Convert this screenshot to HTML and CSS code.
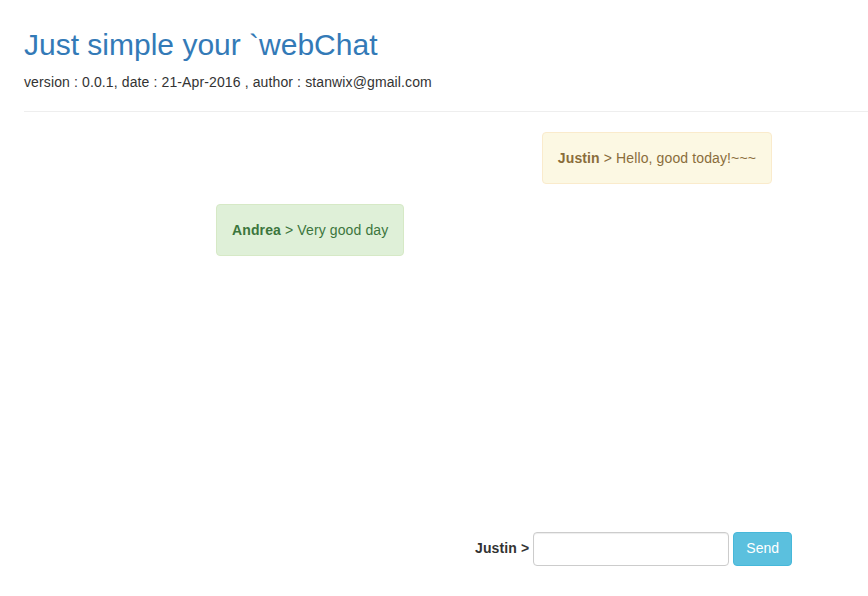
FILE: index.html
```html
<!DOCTYPE html>
<html>
<head>
<meta charset="utf-8">
<link rel="stylesheet" href="styles.css">
</head>
<body>
<div class="page">
  <header class="header">
    <h1 class="title">Just simple your `webChat</h1>
    <p class="meta">version : 0.0.1, date : 21-Apr-2016 , author : stanwix@gmail.com</p>
  </header>
  <hr class="divider">
  <main class="chat">
    <div class="row row-right">
      <div class="bubble bubble-warning"><b>Justin</b> &gt; Hello, good today!~~~</div>
    </div>
    <div class="row row-left">
      <div class="bubble bubble-success"><b>Andrea</b> &gt; Very good day</div>
    </div>
  </main>
  <form class="composer">
    <label class="who">Justin &gt;</label>
    <input class="field" type="text">
    <button class="send" type="button">Send</button>
  </form>
</div>
</body>
</html>
```
FILE: styles.css
```css
* { box-sizing: border-box; }
html, body { margin: 0; padding: 0; background: #fff; }
body {
  font-family: "Liberation Sans", Arial, sans-serif;
  font-size: 14px;
  line-height: 1.42857;
  letter-spacing: 0.12px;
  color: #333;
}
.page {
  width: 868px;
  height: 596px;
  display: flex;
  flex-direction: column;
  overflow: hidden;
}
.header { padding: 28px 0 0 24px; }
.title {
  margin: 0;
  font-size: 30px;
  font-weight: 400;
  line-height: 1.1;
  letter-spacing: 0;
  color: #337ab7;
}
.meta { margin: 12px 0 0; font-size: 14px; }
.divider {
  margin: 18px 0 0 24px;
  border: 0;
  border-top: 1px solid #eee;
  height: 0;
}
.chat {
  flex: 1;
  display: flex;
  flex-direction: column;
  gap: 20px;
  padding-top: 20px;
}
.row { display: flex; }
.row-right { justify-content: flex-end; padding-right: 96px; }
.row-left { padding-left: 216px; }
.bubble {
  padding: 15px;
  border: 1px solid transparent;
  border-radius: 4px;
  line-height: 20px;
}
.bubble b { font-weight: 700; }
.bubble-warning { background: #fcf8e3; border-color: #faebcc; color: #8a6d3b; }
.bubble-success { background: #dff0d8; border-color: #d6e9c6; color: #3c763d; }
.composer {
  display: flex;
  justify-content: flex-end;
  align-items: center;
  padding: 0 76px 30px 0;
}
.who { font-weight: 700; margin-right: 4px; }
.field {
  width: 196px;
  height: 34px;
  border: 1px solid #ccc;
  border-radius: 4px;
  box-shadow: inset 0 1px 1px rgba(0,0,0,.075);
  padding: 6px 12px;
  font: inherit;
}
.send {
  margin-left: 4px;
  height: 34px;
  padding: 6px 12px;
  background: #5bc0de;
  border: 1px solid #46b8da;
  border-radius: 4px;
  color: #fff;
  font: inherit;
}
```
